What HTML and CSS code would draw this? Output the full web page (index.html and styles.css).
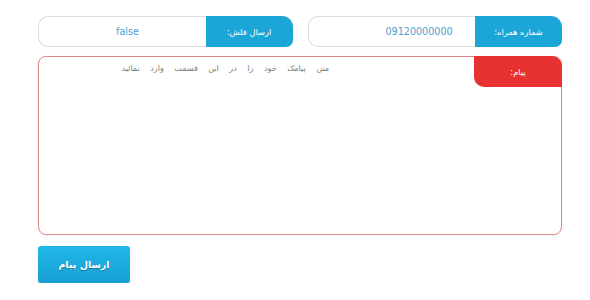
FILE: index.html
```html
<!DOCTYPE html>
<html lang="fa">
<head>
<meta charset="utf-8">
<link rel="stylesheet" href="styles.css">
</head>
<body>
<form class="sms-form" dir="rtl">
  <div class="row">
    <div class="field">
      <label class="tag tag-blue">شماره همراه:</label>
      <div class="value" dir="ltr">09120000000</div>
    </div>
    <div class="field">
      <label class="tag tag-blue">ارسال فلش:</label>
      <div class="value" dir="ltr">false</div>
    </div>
  </div>
  <div class="message">
    <label class="tag tag-red">پیام:</label>
    <div class="placeholder">متن پیامک خود را در این قسمت وارد نمائید</div>
  </div>
  <div class="actions">
    <button type="button" class="send">ارسال پیام</button>
  </div>
</form>
</body>
</html>
```
FILE: styles.css
```css
html, body {
  margin: 0;
  padding: 0;
  background: #ffffff;
}
.sms-form {
  width: 524px;
  margin: 16px 0 0 38px;
  font-family: "DejaVu Sans", sans-serif;
}
.row {
  display: flex;
  gap: 15px;
  height: 31px;
}
.field {
  flex: 1;
  display: flex;
}
.tag {
  display: flex;
  align-items: center;
  justify-content: center;
  width: 87px;
  flex: none;
  color: #ffffff;
  font-size: 8.3px;
}
.tag-blue {
  background: #1ba6d7;
  border-radius: 0 11px 7px 0;
}
.value {
  flex: 1;
  box-sizing: border-box;
  border: 1px solid #dcdcdc;
  border-right: none;
  border-radius: 10px 0 0 10px;
  display: flex;
  align-items: center;
  padding-left: 77px;
  color: #4aa0cc;
  font-size: 9.6px;
}
.message {
  margin-top: 9px;
  height: 179px;
  box-sizing: border-box;
  border: 1px solid #d98a8a;
  border-radius: 8px;
  display: flex;
  align-items: flex-start;
  box-shadow: 0 0 1px rgba(200, 90, 90, 0.3);
}
.tag-red {
  background: #e83232;
  height: 31px;
  margin-top: -1px;
  margin-right: -1px;
  border-radius: 0 10px 0 10px;
  width: 88px;
}
.placeholder {
  margin-right: 145px;
  margin-top: 7px;
  color: #7a7a7a;
  font-size: 8px;
  word-spacing: 8px;
}
.actions {
  margin-top: 11px;
  display: flex;
  justify-content: flex-end;
}
.send {
  width: 92px;
  height: 37px;
  border: none;
  border-radius: 3px;
  background: linear-gradient(#1fb7ea, #199fd2);
  box-shadow: 0 1px 1px rgba(0, 0, 0, 0.25);
  color: #ffffff;
  font-family: "DejaVu Sans", sans-serif;
  font-weight: bold;
  font-size: 9.5px;
  text-shadow: 0 1px 1px rgba(0, 0, 0, 0.3);
  padding: 0;
}
```
